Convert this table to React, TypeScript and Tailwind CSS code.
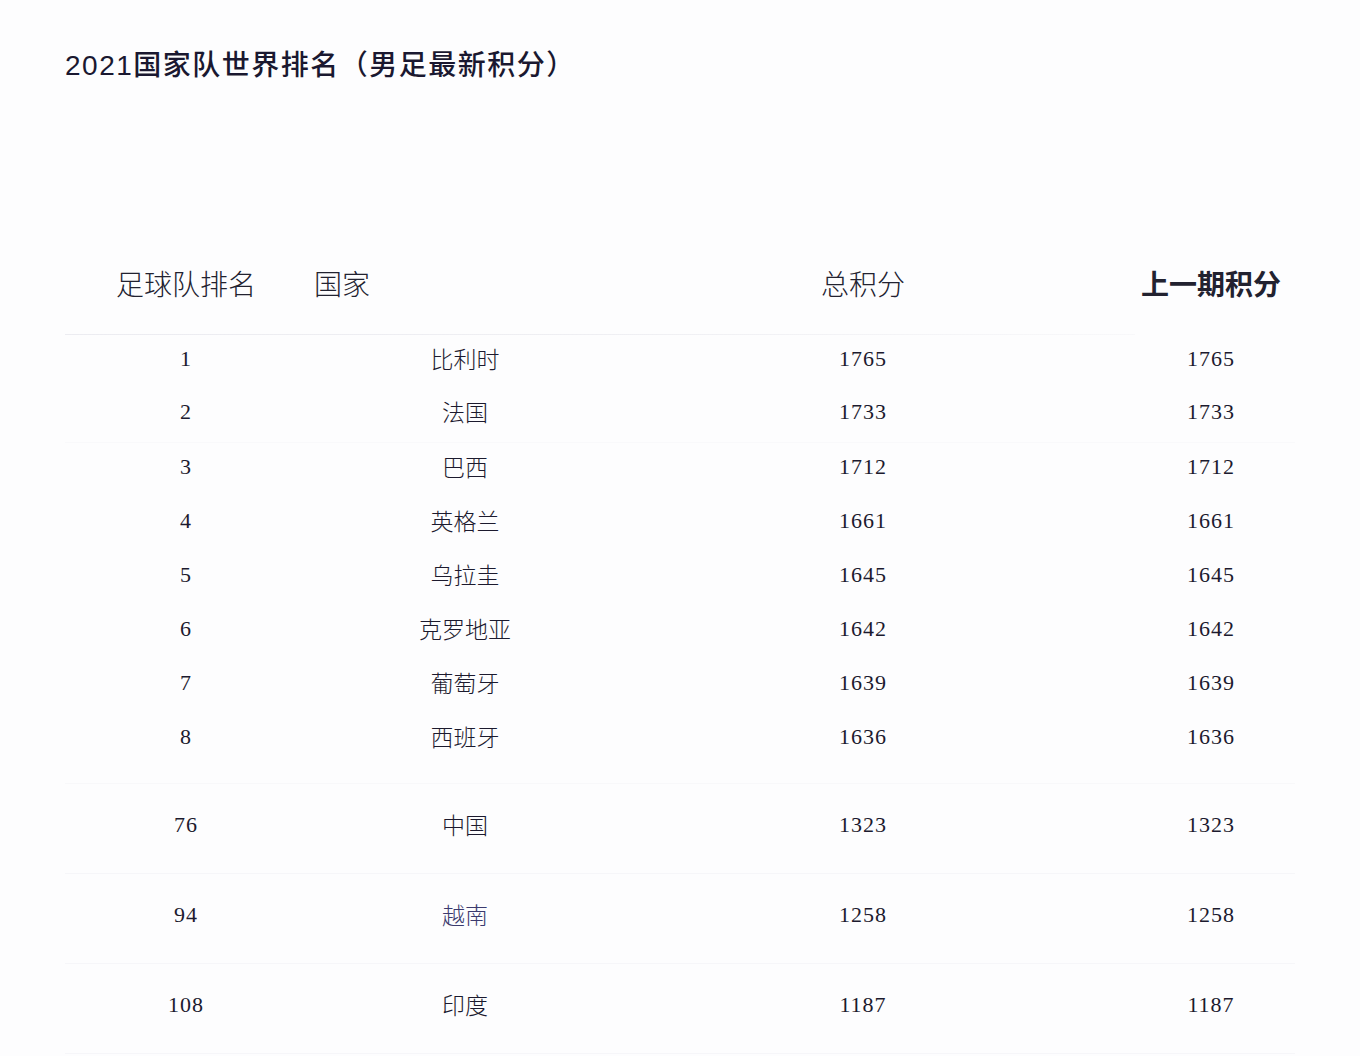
import React from "react";

const top8 = [
  ["1", "比利时", "1765", "1765"],
  ["2", "法国", "1733", "1733"],
  ["3", "巴西", "1712", "1712"],
  ["4", "英格兰", "1661", "1661"],
  ["5", "乌拉圭", "1645", "1645"],
  ["6", "克罗地亚", "1642", "1642"],
  ["7", "葡萄牙", "1639", "1639"],
  ["8", "西班牙", "1636", "1636"],
];

const rest = [
  ["76", "中国", "1323", "1323", "text-[#1c1a2e]"],
  ["94", "越南", "1258", "1258", "text-[#3b3a6e]"],
  ["108", "印度", "1187", "1187", "text-[#1c1a2e]"],
];

const num = "font-['Liberation_Serif','DejaVu_Serif',serif] text-[22px] text-[#1c1a2e] tracking-[1px]";
const cjk = "font-['Noto_Sans_CJK_SC',sans-serif] text-[23px] font-light";

function Row({ r, h, nameColor }: { r: string[]; h: string; nameColor?: string }) {
  return (
    <div className={`grid grid-cols-[242px_316px_480px_216px] items-center pb-[8px] ${h}`}>
      <div className={`text-center ${num}`}>{r[0]}</div>
      <div className={`text-center ${cjk} ${nameColor ?? "text-[#1c1a2e]"}`}>{r[1]}</div>
      <div className={`text-center ${num}`}>{r[2]}</div>
      <div className={`text-center ${num}`}>{r[3]}</div>
    </div>
  );
}

export default function App() {
  return (
    <div className="min-h-[1056px] bg-[#fdfdfe] px-[65px] pt-[46px]">
      <h1 className="font-['Liberation_Sans','Noto_Sans_CJK_SC',sans-serif] text-[28px] leading-[34px] font-medium text-[#1a1830] tracking-[1.5px]">
        2021<span className="font-['Noto_Sans_CJK_SC',sans-serif]">国家队世界排名（男足最新积分）</span>
      </h1>

      <div className="mt-[153px] grid h-[98px] grid-cols-[242px_316px_480px_216px] items-center pb-[4px] font-['Noto_Sans_CJK_SC',sans-serif] text-[28px] text-[#222230]">
        <div className="text-center font-light">足球队排名</div>
        <div className="pl-[7px] font-light">国家</div>
        <div className="text-center font-light">总积分</div>
        <div className="text-center font-bold">上一期积分</div>
      </div>
      <div className="h-px w-[1070px] bg-gradient-to-r from-[#ececf1] via-[#efeff3] to-[#f8f8fa]" />

      <div>
        {top8.map((r, i) => (
          <div key={r[0]} className={i === 1 ? "border-b border-[#f9f9fb]" : ""}>
            <Row r={r} h={i === 1 ? "h-[53px]" : "h-[54px]"} />
          </div>
        ))}
      </div>

      <div className="mt-[16px] border-t border-[#f8f8fa]">
        {rest.map((r) => (
          <div key={r[0]} className="border-b border-[#f6f6f9]">
            <Row r={r} h="h-[89px]" nameColor={r[4]} />
          </div>
        ))}
      </div>
    </div>
  );
}
